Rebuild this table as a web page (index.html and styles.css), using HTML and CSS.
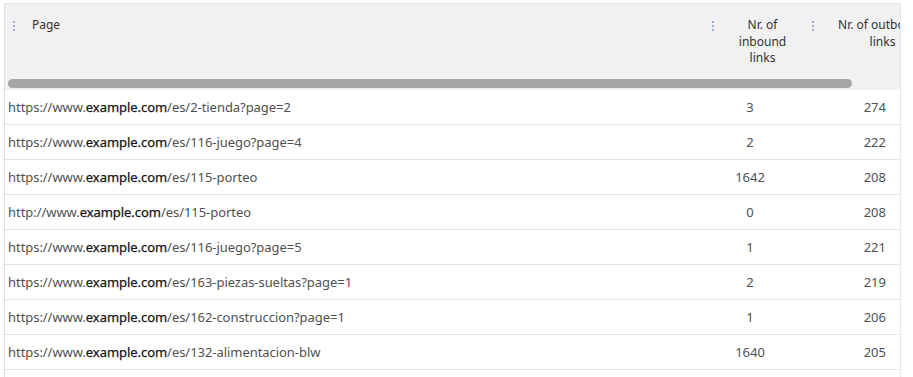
FILE: index.html
```html
<!DOCTYPE html>
<html>
<head>
<meta charset="utf-8">
<link rel="stylesheet" href="styles.css">
</head>
<body>
<div class="frame">
  <div class="head">
    <div class="head-row">
      <div class="hcell hc-page"><svg class="dots" width="4" height="12" viewBox="0 0 4 12"><circle cx="2" cy="2" r="1.1"/><circle cx="2" cy="6" r="1.1"/><circle cx="2" cy="10" r="1.1"/></svg><span class="htext">Page</span></div>
      <div class="hcell hc-in"><svg class="dots" width="4" height="12" viewBox="0 0 4 12"><circle cx="2" cy="2" r="1.1"/><circle cx="2" cy="6" r="1.1"/><circle cx="2" cy="10" r="1.1"/></svg><span class="htext center">Nr. of<br>inbound<br>links</span></div>
      <div class="hcell hc-out"><svg class="dots" width="4" height="12" viewBox="0 0 4 12"><circle cx="2" cy="2" r="1.1"/><circle cx="2" cy="6" r="1.1"/><circle cx="2" cy="10" r="1.1"/></svg><span class="htext center">Nr. of outbound<br>links</span></div>
    </div>
    <div class="track"><div class="thumb"></div></div>
  </div>
  <div class="body">
    <div class="row"><div class="c-page">https://www.<b>example.com</b>/es/2-tienda?page=2</div><div class="c-in">3</div><div class="c-out">274</div></div>
    <div class="row"><div class="c-page">https://www.<b>example.com</b>/es/116-juego?page=4</div><div class="c-in">2</div><div class="c-out">222</div></div>
    <div class="row"><div class="c-page">https://www.<b>example.com</b>/es/115-porteo</div><div class="c-in">1642</div><div class="c-out">208</div></div>
    <div class="row"><div class="c-page">http://www.<b>example.com</b>/es/115-porteo</div><div class="c-in">0</div><div class="c-out">208</div></div>
    <div class="row"><div class="c-page">https://www.<b>example.com</b>/es/116-juego?page=5</div><div class="c-in">1</div><div class="c-out">221</div></div>
    <div class="row"><div class="c-page">https://www.<b>example.com</b>/es/163-piezas-sueltas?page=1</div><div class="c-in">2</div><div class="c-out">219</div></div>
    <div class="row"><div class="c-page">https://www.<b>example.com</b>/es/162-construccion?page=1</div><div class="c-in">1</div><div class="c-out">206</div></div>
    <div class="row"><div class="c-page">https://www.<b>example.com</b>/es/132-alimentacion-blw</div><div class="c-in">1640</div><div class="c-out">205</div></div>
    <div class="row"><div class="c-page"></div><div class="c-in"></div><div class="c-out"></div></div>
  </div>
</div>
</body>
</html>
```

FILE: styles.css
```css
html, body {
  margin: 0;
  padding: 0;
  background: #fff;
}
body {
  font-family: "Noto Sans", "Open Sans", sans-serif;
  color: #444;
}
.frame {
  margin: 3px 0 0 4px;
  width: 895px;
  height: 374px;
  border-left: 1px solid #e2e2e2;
  border-top: 1px solid #e2e2e2;
  border-right: 1px solid #e8e8e8;
  overflow: hidden;
}
.head {
  background: #f1f1f1;
  height: 86px;
  display: flex;
  flex-direction: column;
}
.head-row {
  display: grid;
  grid-template-columns: 699px 100px 146px;
  height: 72px;
}
.hcell {
  display: flex;
  align-items: flex-start;
  padding-top: 13px;
  font-size: 12px;
  line-height: 16.5px;
  color: #333;
  white-space: nowrap;
}
.dots {
  fill: #8f9fcc;
  flex: none;
  margin-top: 2.5px;
}
.hc-page { padding-left: 7px; }
.hc-page .htext { padding-left: 16px; }
.hc-in { padding-left: 7px; }
.hc-in .htext { flex: 1; text-align: center; padding-left: 6px; padding-right: 0; }
.hc-out { padding-left: 7px; }
.hc-out .htext { flex: 1; text-align: center; padding-left: 0; padding-right: 0; }
.track {
  height: 14px;
  padding: 3px 0 0 3px;
  box-sizing: border-box;
}
.thumb {
  width: 844px;
  height: 9px;
  border-radius: 5px;
  background: #a7a7a7;
}
.row {
  display: grid;
  grid-template-columns: 699px 100px 146px;
  height: 34px;
  border-bottom: 1px solid #e3e3e3;
  align-items: center;
  font-size: 13px;
  color: #505050;
}
.c-page {
  padding-left: 3px;
  white-space: nowrap;
  letter-spacing: -0.05px;
}
.c-page b {
  font-weight: 400;
  color: #151515;
  -webkit-text-stroke: 0.25px #151515;
}
.c-in {
  text-align: center;
  padding-right: 8px;
}
.c-out {
  text-align: right;
  padding-right: 64px;
}
```
